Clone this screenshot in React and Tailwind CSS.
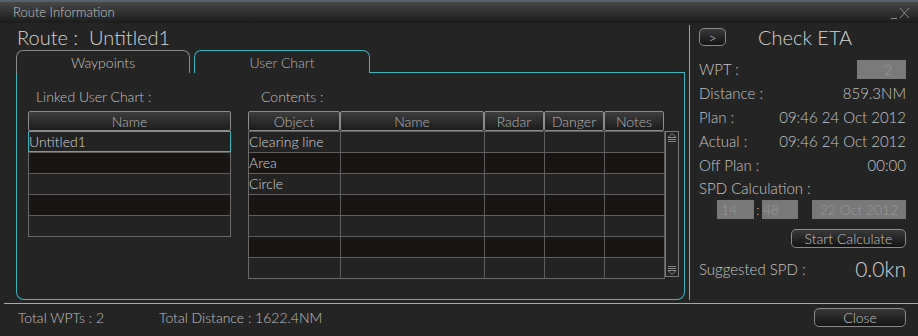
import React from 'react';

const FONT = { fontFamily: 'Lato, "Liberation Sans", sans-serif' };

const cols = [
  { label: 'Object', w: 'w-[92px]' },
  { label: 'Name', w: 'w-[144px]' },
  { label: 'Radar', w: 'w-[60px]' },
  { label: 'Danger', w: 'w-[60px]' },
  { label: 'Notes', w: 'w-[60px]' },
];

const contents = ['Clearing line', 'Area', 'Circle', '', '', '', ''];

function HeadCell({ children, className }) {
  return (
    <div
      className={`h-[20px] flex items-center justify-center border border-[#8c8c8c] rounded-[2px] bg-gradient-to-b from-[#3e3e3e] to-[#1c1c1c] text-[14px] text-[#b4b4b4] ${className}`}
    >
      {children}
    </div>
  );
}

function Btn({ children, className }) {
  return (
    <div
      className={`flex items-center justify-center border border-[#8a8a8a] rounded-[5px] bg-gradient-to-b from-[#3a3a3a] to-[#141414] text-[14px] text-[#c4c4c4] ${className}`}
    >
      {children}
    </div>
  );
}

function ScrollArrow({ down }) {
  return (
    <svg width="10" height="10" viewBox="0 0 10 10" className="text-[#8a8a8a]">
      {down ? (
        <g fill="none" stroke="currentColor" strokeWidth="1">
          <line x1="1" y1="1.5" x2="9" y2="1.5" />
          <line x1="1" y1="3.5" x2="9" y2="3.5" />
          <path d="M1 5.5 L9 5.5 L5 9.5 Z" />
        </g>
      ) : (
        <g fill="none" stroke="currentColor" strokeWidth="1">
          <path d="M5 0.5 L9 4.5 L1 4.5 Z" />
          <line x1="1" y1="6.5" x2="9" y2="6.5" />
          <line x1="1" y1="8.5" x2="9" y2="8.5" />
        </g>
      )}
    </svg>
  );
}

function InfoRow({ label, value }) {
  return (
    <div className="h-[24px] flex items-center justify-between text-[15px] text-[#c4c4c4]">
      <span>{label}</span>
      <span>{value}</span>
    </div>
  );
}

export default function App() {
  return (
    <div className="w-[918px] h-[336px] overflow-hidden bg-[#242424] flex flex-col font-light" style={FONT}>
      {/* title bar */}
      <div className="h-[23px] shrink-0 flex items-center justify-between pl-[13px] pr-[6px] bg-gradient-to-b from-[#474747] to-[#1c1c1c] border-t-2 border-[#56626e]">
        <span className="text-[13px] text-[#c4c4c4] leading-none">Route Information</span>
        <svg width="22" height="14" viewBox="0 0 22 14" className="text-[#8c8c8c]">
          <g stroke="currentColor" strokeWidth="1" fill="none">
            <line x1="1" y1="12.5" x2="7" y2="12.5" />
            <line x1="10" y1="2" x2="19" y2="12" />
            <line x1="19" y1="2" x2="10" y2="12" />
          </g>
        </svg>
      </div>

      {/* body */}
      <div className="h-[280px] shrink-0 flex">
        {/* left */}
        <div className="w-[689px] pl-[16px] pr-[4px] flex flex-col">
          <div className="h-[27px] flex items-center pl-[1px] text-[20px] text-[#d4d4d4] leading-none">
            Route :&nbsp; Untitled1
          </div>
          <div className="h-[23px] flex items-end">
            <div className="w-[174px] h-[23px] border border-b-0 border-[#8a8a8a] rounded-t-[7px] flex items-center justify-center text-[14px] text-[#c4c4c4]">
              Waypoints
            </div>
            <div className="w-[4px] h-full" />
            <div className="w-[176px] h-[23px] border border-b-0 border-[#3ab4bd] rounded-t-[7px] flex items-center justify-center text-[14px] text-[#b4b4b4]">
              User Chart
            </div>
            <div className="flex-1 h-full border-b border-[#3ab4bd]" />
          </div>
          <div className="h-[227px] border border-t-0 border-[#3ab4bd] rounded-b-[8px] flex pl-[11px]">
            {/* linked user chart */}
            <div className="w-[203px] flex flex-col">
              <div className="h-[20px] mt-[13px] pl-[8px] text-[14px] text-[#c0c0c0] flex items-center">
                Linked User Chart :
              </div>
              <div className="mt-[5px] flex flex-col">
                <HeadCell className="w-[203px]">Name</HeadCell>
                <div className="border-l border-r border-b border-[#6a6a6a]">
                  {['Untitled1', '', '', '', ''].map((t, i) => (
                    <div
                      key={i}
                      className={`h-[21px] flex items-center pb-[1px] text-[14px] text-[#d4d4d4] ${
                        i === 0 ? 'border border-[#3ab4bd] -mx-px' : 'border-t border-[#5e5e5e]'
                      } ${i % 2 === 1 ? 'bg-[#181513]' : 'bg-[#232323]'}`}
                    >
                      {t}
                    </div>
                  ))}
                </div>
              </div>
            </div>

            {/* contents */}
            <div className="ml-[17px] flex flex-col">
              <div className="h-[20px] mt-[13px] pl-[13px] text-[14px] text-[#c0c0c0] flex items-center">
                Contents :
              </div>
              <div className="mt-[5px] flex">
                <div className="flex flex-col">
                  <div className="flex">
                    {cols.map((c) => (
                      <HeadCell key={c.label} className={c.w}>
                        {c.label}
                      </HeadCell>
                    ))}
                  </div>
                  <div className="border-l border-b border-[#6a6a6a]">
                    {contents.map((t, i) => (
                      <div
                        key={i}
                        className={`h-[21px] flex border-t border-[#5e5e5e] ${
                          i % 2 === 1 ? 'bg-[#181513]' : 'bg-[#232323]'
                        }`}
                      >
                        {cols.map((c, j) => (
                          <div
                            key={c.label}
                            className={`${c.w} ${j === 0 ? 'w-[91px]' : ''} h-full pb-[2px] border-r border-[#5e5e5e] flex items-center text-[14px] text-[#d4d4d4] whitespace-nowrap`}
                          >
                            {j === 0 ? t : ''}
                          </div>
                        ))}
                      </div>
                    ))}
                  </div>
                </div>
                <div className="w-[14px] mt-[20px] h-[146px] border border-[#7a7a7a] flex flex-col items-center justify-between py-[1px]">
                  <ScrollArrow />
                  <ScrollArrow down />
                </div>
              </div>
            </div>
          </div>
        </div>

        {/* right */}
        <div className="flex-1 mt-[2px] mb-[3px] border-l border-[#a0a0a0] pl-[9px] pr-[12px] flex flex-col">
          <div className="mt-[3px] h-[18px] flex items-center">
            <Btn className="w-[27px] h-[18px] text-[13px]">&gt;</Btn>
            <span className="ml-[32px] text-[20px] text-[#d4d4d4] leading-none">Check ETA</span>
          </div>
          <div className="mt-[11px] h-[24px] flex items-center justify-between text-[15px] text-[#c4c4c4]">
            <span>WPT :</span>
            <div className="w-[49px] h-[19px] bg-[#7a7a7a] text-[#9c9c9c] text-[14px] flex items-center justify-end pr-[14px]">
              2
            </div>
          </div>
          <InfoRow label="Distance :" value="859.3NM" />
          <InfoRow label="Plan :" value="09:46 24 Oct 2012" />
          <InfoRow label="Actual :" value="09:46 24 Oct 2012" />
          <InfoRow label="Off Plan :" value="00:00" />
          <div className="h-[22px] flex items-center text-[15px] text-[#c4c4c4]">SPD Calculation :</div>
          <div className="mt-[1px] h-[19px] flex items-center text-[14px]">
            <div className="ml-[18px] w-[37px] h-full bg-[#787878] text-[#999] flex items-center pl-[4px]">14</div>
            <span className="w-[8px] text-center text-[#c4c4c4]">:</span>
            <div className="w-[36px] h-full bg-[#787878] text-[#999] flex items-center pl-[1px]">48</div>
            <div className="ml-[14px] flex-1 h-full bg-[#787878] text-[#999] flex items-center justify-center">
              22 Oct 2012
            </div>
          </div>
          <div className="mt-[10px] flex justify-end">
            <Btn className="w-[115px] h-[19px]">Start Calculate</Btn>
          </div>
          <div className="mt-[9px] h-[24px] flex items-center justify-between text-[#c4c4c4]">
            <span className="text-[15px]">Suggested SPD :</span>
            <span className="text-[21px] text-[#d4d4d4]">0.0kn</span>
          </div>
        </div>
      </div>

      {/* footer */}
      <div className="ml-[4px] border-t border-[#a8a8a8] h-[28px] flex items-center pl-[14px] pr-[12px] text-[14px] text-[#c0c0c0]">
        <span>Total WPTs : 2</span>
        <span className="ml-[55px]">Total Distance : 1622.4NM</span>
        <Btn className="ml-auto w-[92px] h-[19px]">Close</Btn>
      </div>
    </div>
  );
}
